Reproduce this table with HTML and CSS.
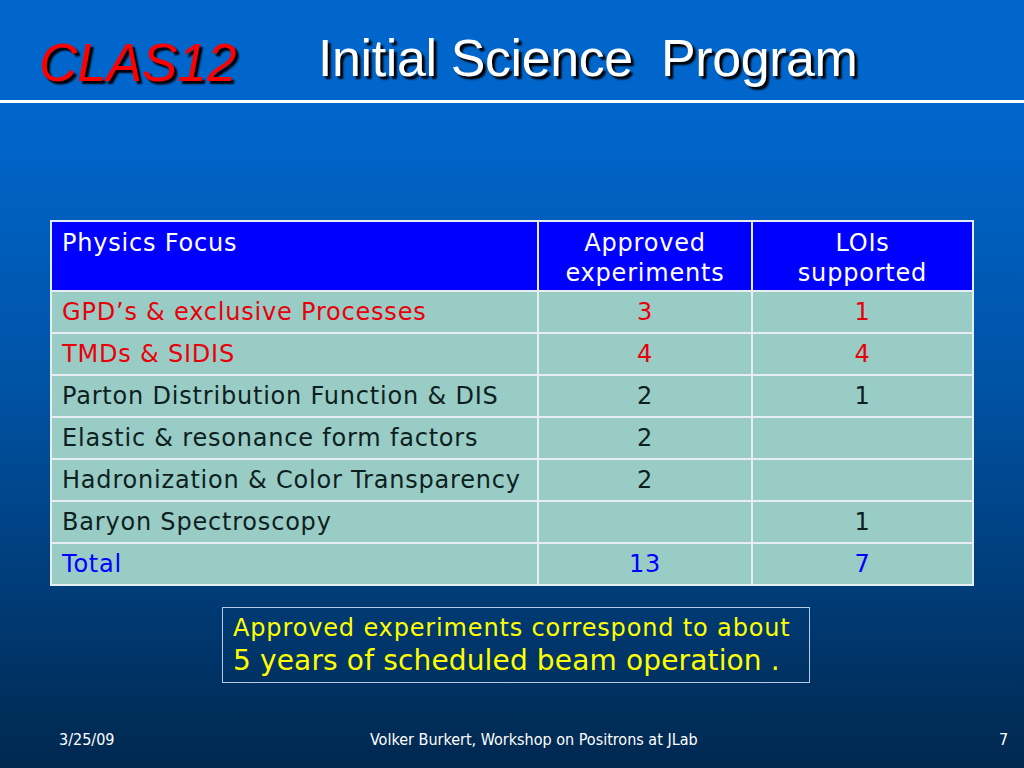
FILE: index.html
```html
<!DOCTYPE html>
<html>
<head>
<meta charset="utf-8">
<link rel="stylesheet" href="styles.css">
</head>
<body>
<div class="slide">
  <header class="head">
    <div class="brand">CLAS12</div>
    <h1 class="title">Initial Science&nbsp; Program</h1>
  </header>
  <div class="rule"></div>
  <main class="content">
    <table class="prog">
      <colgroup>
        <col class="w1"><col class="w2"><col class="w3">
      </colgroup>
      <tr class="hdr">
        <th class="c1">Physics Focus</th>
        <th>Approved<br>experiments</th>
        <th>LOIs<br>supported</th>
      </tr>
      <tr class="red"><td class="c1">GPD’s &amp; exclusive Processes</td><td>3</td><td>1</td></tr>
      <tr class="red"><td class="c1">TMDs &amp; SIDIS</td><td>4</td><td>4</td></tr>
      <tr><td class="c1">Parton Distribution Function &amp; DIS</td><td>2</td><td>1</td></tr>
      <tr><td class="c1">Elastic &amp; resonance form factors</td><td>2</td><td></td></tr>
      <tr><td class="c1">Hadronization &amp; Color Transparency</td><td>2</td><td></td></tr>
      <tr><td class="c1">Baryon Spectroscopy</td><td></td><td>1</td></tr>
      <tr class="blue"><td class="c1">Total</td><td>13</td><td>7</td></tr>
    </table>
    <div class="note">
      <div class="l1">Approved experiments correspond to about</div>
      <div class="l2">5 years of scheduled beam operation .</div>
    </div>
  </main>
  <footer class="foot">
    <span class="date">3/25/09</span>
    <span class="mid">Volker Burkert, Workshop on Positrons at JLab</span>
    <span class="num">7</span>
  </footer>
</div>
</body>
</html>
```

FILE: styles.css
```css
html, body {
  margin: 0;
  padding: 0;
}
body {
  width: 1024px;
  height: 768px;
  overflow: hidden;
}
.slide {
  width: 1024px;
  height: 768px;
  display: flex;
  flex-direction: column;
  background: linear-gradient(to bottom, #0066cc 0px, #0066cc 110px, #0053a6 380px, #00284f 768px);
  font-family: "DejaVu Sans", Verdana, sans-serif;
}
.head {
  height: 100px;
  display: flex;
  align-items: flex-start;
}
.brand {
  margin-left: 39px;
  margin-top: 33px;
  width: 279px;
  font-family: "Liberation Sans", Arial, sans-serif;
  font-style: italic;
  font-size: 53px;
  line-height: 60px;
  color: #ff0000;
  text-shadow: 3px 3px 2px #000;
}
.title {
  margin: 26px 0 0 0;
  font-family: "Liberation Sans", Arial, sans-serif;
  font-weight: normal;
  font-size: 52px;
  line-height: 64px;
  color: #ffffff;
  letter-spacing: -0.4px;
  text-shadow: 3px 3px 2px #000;
}
.rule {
  height: 3px;
  background: #ffffff;
}
.content {
  flex: 1;
  display: flex;
  flex-direction: column;
  align-items: flex-start;
}
.prog {
  margin: 117px 0 0 50px;
  border-collapse: collapse;
  table-layout: fixed;
  width: 922px;
  border: 2px solid #e6eef2;
  font-size: 24px;
  letter-spacing: 0.8px;
}
.w1 { width: 487px; }
.w2 { width: 214px; }
.w3 { width: 221px; }
.prog th, .prog td {
  border: 2px solid #e6eef2;
  padding: 0;
  color: #0d1f1f;
  background: #99ccc5;
  text-align: center;
  font-weight: normal;
  height: 40px;
  white-space: nowrap;
}
.prog .c1 {
  text-align: left;
  padding-left: 10px;
}
.prog .hdr th {
  background: #0000ff;
  color: #ffffff;
  height: 70px;
  vertical-align: top;
  padding-top: 6px;
  line-height: 30px;
  box-sizing: border-box;
}
.prog .red td { color: #e8000b; }
.prog .blue td { color: #0000ff; }
.note {
  margin: 21px 0 0 222px;
  border: 1px solid #b4cbe6;
  padding: 4px 18px 4px 10px;
  color: #ffff00;
}
.l1 {
  font-size: 24px;
  letter-spacing: 0.85px;
  line-height: 32px;
}
.l2 {
  font-size: 28px;
  letter-spacing: 0.15px;
  line-height: 34px;
}
.foot {
  height: 52px;
  display: flex;
  align-items: flex-start;
  padding-top: 14px;
  box-sizing: border-box;
  font-family: "DejaVu Sans Condensed", Tahoma, sans-serif;
  font-size: 16px;
  color: #ffffff;
}
.date {
  margin-left: 59px;
  width: 311px;
}
.mid {
  width: 629px;
}
```
